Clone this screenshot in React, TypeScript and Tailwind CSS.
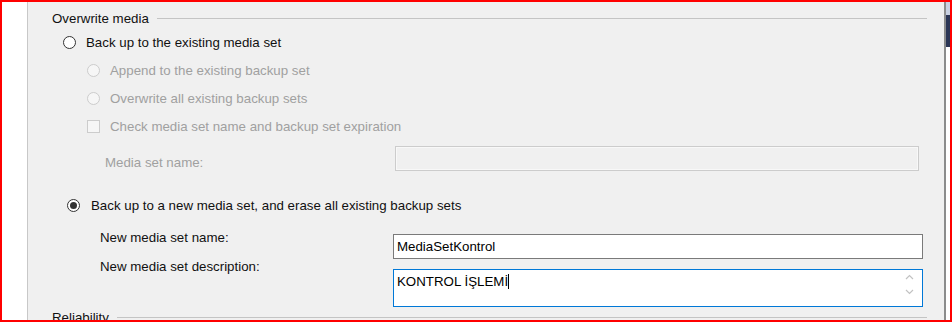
import React from "react";

interface MarkProp {
  checked?: boolean;
  disabled?: boolean;
}

const Radio: React.FC<MarkProp> = ({ checked, disabled }) => {
  return (
    <span
      className={`w-[13px] h-[13px] shrink-0 rounded-full border flex items-center justify-center ${
        disabled ? "border-[#cccccc] bg-[#f6f6f6]" : "border-[#333333] bg-white"
      }`}
    >
      {checked && <span className="w-[7px] h-[7px] rounded-full bg-[#333333]" />}
    </span>
  );
};

const CheckBox: React.FC<MarkProp> = ({ disabled }) => {
  return (
    <span
      className={`w-[13px] h-[13px] shrink-0 border ${
        disabled ? "border-[#cccccc] bg-[#f6f6f6]" : "border-[#333333] bg-white"
      }`}
    />
  );
};

const GroupHeader = ({ title }: { title: string }) => {
  return (
    <div className="h-[20px] flex items-center shrink-0">
      <span>{title}</span>
      <div className="flex-1 ml-[8px] border-t border-[#c4c4c4]" />
    </div>
  );
};

export default function App() {
  return (
    <div className="w-[952px] h-[322px] border-2 border-[#ff0000] flex overflow-hidden bg-white font-['Liberation_Sans',sans-serif] text-[13.3px] text-[#111111]">
      <div className="w-[25px] bg-white" />
      <div className="w-px bg-[#c8c8c8]" />

      <div className="flex-1 flex flex-col bg-[#f0f0f0] pl-[24px] pr-[17px] pt-[6px] leading-[15px]">
        <GroupHeader title="Overwrite media" />

        <div className="mt-[4px] h-[20px] shrink-0 flex items-center pl-[11px] gap-[10px]">
          <Radio />
          <span>Back up to the existing media set</span>
        </div>

        <div className="mt-[8px] h-[20px] shrink-0 flex items-center pl-[35px] gap-[10px] text-[#a0a0a0]">
          <Radio disabled />
          <span>Append to the existing backup set</span>
        </div>
        <div className="mt-[8px] h-[20px] shrink-0 flex items-center pl-[35px] gap-[10px] text-[#a0a0a0]">
          <Radio disabled />
          <span>Overwrite all existing backup sets</span>
        </div>
        <div className="mt-[8px] h-[20px] shrink-0 flex items-center pl-[35px] gap-[10px] text-[#a0a0a0]">
          <CheckBox disabled />
          <span>Check media set name and backup set expiration</span>
        </div>

        <div className="mt-[10px] h-[25px] shrink-0 flex">
          <div className="w-[343px] pl-[53px] pt-[9px] text-[#a0a0a0]">Media set name:</div>
          <div className="flex-1 mr-[8px] border border-[#cccccc] bg-[#f0f0f0] shadow-[inset_0_0_0_1px_#f8f8f8]" />
        </div>

        <div className="mt-[24px] h-[20px] shrink-0 flex items-center pl-[15px] gap-[11px]">
          <Radio checked />
          <span>Back up to a new media set, and erase all existing backup sets</span>
        </div>

        <div className="mt-[15px] shrink-0 flex">
          <div className="w-[341px] pl-[48px] flex flex-col">
            <span className="h-[15px]">New media set name:</span>
            <span className="h-[15px] mt-[14px]">New media set description:</span>
          </div>
          <div className="flex-1 mr-[4px] pt-[4px] flex flex-col">
            <div className="h-[25px] border border-[#7a7a7a] bg-white flex items-center pl-[3px] text-black">
              MediaSetKontrol
            </div>
            <div className="mt-[10px] h-[38px] border border-[#0078d7] bg-white flex text-black">
              <div className="flex-1 pl-[3px] pt-[4px] flex items-start">
                <span>KONTROL İŞLEMİ</span>
                <span className="w-px h-[15px] bg-black" />
              </div>
              <div className="w-[25px] flex flex-col items-center pt-[4px] gap-[9px]">
                <svg width="9" height="6" viewBox="0 0 9 6" fill="none" stroke="#c2c2c2" strokeWidth="1.2">
                  <path d="M1 5L4.5 1.5L8 5" />
                </svg>
                <svg width="9" height="6" viewBox="0 0 9 6" fill="none" stroke="#c2c2c2" strokeWidth="1.2">
                  <path d="M1 1L4.5 4.5L8 1" />
                </svg>
              </div>
            </div>
          </div>
        </div>

        <GroupHeader title="Reliability" />
      </div>

      <div className="w-[2px] bg-[#8c8c8c]" />
      <div className="w-[4px] flex flex-col bg-white">
        <div className="h-[13px] bg-[#c9d1e2]" />
        <div className="h-[32px] bg-[#2b3656]" />
      </div>
    </div>
  );
}
